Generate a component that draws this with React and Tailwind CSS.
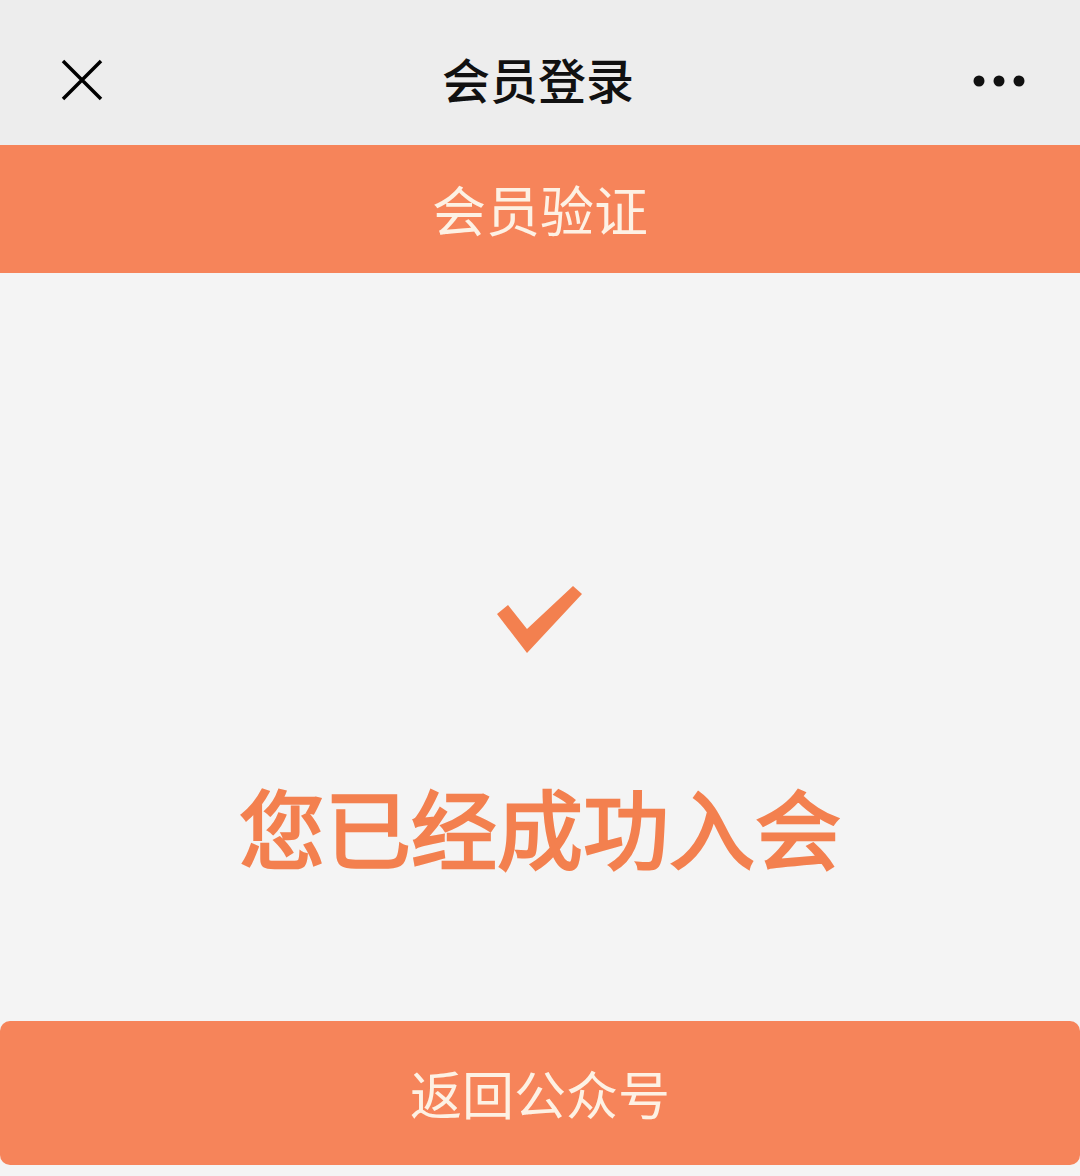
const CJK = { fontFamily: '"Noto Sans CJK SC", "Noto Sans", sans-serif' };

const CloseIcon = () => (
  <svg width="42" height="42" viewBox="0 0 42 42" className="text-black">
    <path d="M2 2 L40 40 M40 2 L2 40" stroke="currentColor" strokeWidth="3.5" fill="none" />
  </svg>
);

const MoreIcon = () => (
  <svg width="52" height="12" viewBox="0 0 52 12">
    <circle cx="6" cy="6" r="5.5" fill="#111" />
    <circle cx="26" cy="6" r="5.5" fill="#111" />
    <circle cx="46" cy="6" r="5.5" fill="#111" />
  </svg>
);

const CheckMark = () => (
  <svg width="88" height="72" viewBox="0 0 88 72">
    <polygon points="1,30 12,21 31,45 77,2 86,10 31,69" fill="#f3804f" />
  </svg>
);

export default function App() {
  return (
    <div className="w-[1080px] h-[1176px] flex flex-col bg-[#f4f4f4]" style={CJK}>
      {/* ── Top nav ── */}
      <div className="h-[145px] bg-[#ededed] flex items-center justify-between pl-[61px] pr-[55px] pt-[14px]">
        <CloseIcon />
        <h1 className="text-[48px] font-medium text-[#111] leading-none -mt-[4px]">会员登录</h1>
        <div className="mt-[2px]">
          <MoreIcon />
        </div>
      </div>

      {/* ── Section bar ── */}
      <div className="h-[128px] bg-[#f6845a] flex items-center justify-center">
        <span className="text-[54px] text-[#fdf1e4] leading-none">会员验证</span>
      </div>

      {/* ── Result ── */}
      <div className="flex-1 flex flex-col items-center pt-[311px]">
        <CheckMark />
        <p className="mt-[127px] text-[86px] font-normal text-[#f3804f] leading-none [-webkit-text-stroke:2.5px_#f3804f]">
          您已经成功入会
        </p>
      </div>

      {/* ── Back button ── */}
      <div className="pb-[11px]">
        <button className="w-full h-[144px] rounded-[10px] bg-[#f6845a] flex items-center justify-center">
          <span className="text-[52px] text-[#fdf1e4] leading-none">返回公众号</span>
        </button>
      </div>
    </div>
  );
}
